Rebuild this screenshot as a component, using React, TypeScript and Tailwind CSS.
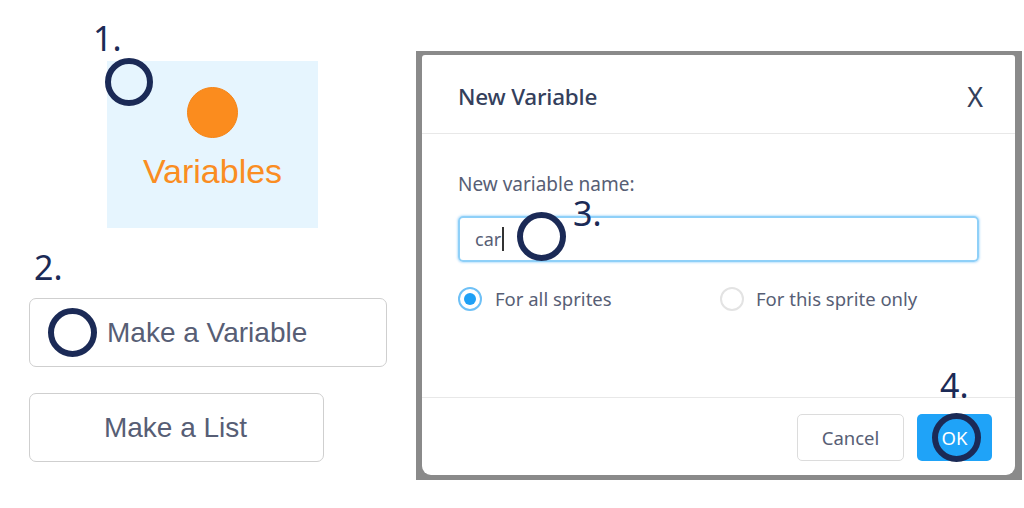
import React from "react";

function Ring({ className }: { className: string }) {
  return (
    <div
      className={`absolute rounded-full border-[6px] border-[#1b2a56] pointer-events-none ${className}`}
    />
  );
}

function Num({ children, className }: { children: React.ReactNode; className: string }) {
  return (
    <div
      className={`absolute text-[34px] leading-[28px] text-[#1b2a56] ${className}`}
      style={{ fontFamily: '"Noto Sans", "Liberation Sans", sans-serif' }}
    >
      {children}
    </div>
  );
}

export default function App() {
  const sans = { fontFamily: '"Liberation Sans", Arial, sans-serif' };
  const ui = { fontFamily: '"Noto Sans", "Open Sans", sans-serif' };
  return (
    <div className="relative w-[1024px] h-[508px] bg-white flex overflow-hidden">
      {/* Left column */}
      <div className="w-[416px] flex flex-col" style={sans}>
        <div className="ml-[107px] mt-[61px] w-[211px] h-[167px] bg-[#e6f5fe] flex flex-col items-center">
          <div className="mt-[26px] w-[51px] h-[51px] rounded-full bg-[#fb8c1e] border border-[#f58416]" />
          <div className="mt-[16px] text-[34px] leading-none text-[#fa8d22]">Variables</div>
        </div>
        <div className="ml-[29px] mt-[70px] w-[358px] h-[69px] rounded-[7px] border-[1.5px] border-[#cfcfcf] flex items-center pl-[77px]">
          <span className="text-[28px] leading-none text-[#575e75]">Make a Variable</span>
        </div>
        <div className="ml-[29px] mt-[26px] w-[295px] h-[69px] rounded-[7px] border-[1.5px] border-[#cfcfcf] flex items-center justify-center">
          <span className="text-[28px] leading-none text-[#575e75] mr-[2px]">Make a List</span>
        </div>
      </div>

      {/* Dialog */}
      <div className="mt-[51px] w-[606px] h-[429px] bg-[#8a8a8a] pt-[4px] pl-[6px] pr-[7px] pb-[5px]" style={ui}>
        <div className="w-full h-full bg-white rounded-t-[3px] rounded-b-[9px] flex flex-col">
          <div className="h-[79px] border-b border-[#e8e8e8] flex items-center justify-between pl-[36px] pr-[32px]">
            <span className="mt-[5px] text-[22.5px] font-medium text-[#34405c] tracking-[-0.2px]">New Variable</span>
            <span className="mt-[5px] text-[27px] font-normal text-[#34405c] leading-none">X</span>
          </div>
          <div className="flex-1 flex flex-col px-[36px]">
            <div className="mt-[41px] text-[19px] leading-none text-[#575e75]">New variable name:</div>
            <div className="mt-[22px] h-[46px] rounded-[5px] border-2 border-[#8fd0f8] shadow-[0_0_2px_1px_rgba(76,176,245,0.35)] flex items-center pl-[15px]">
              <span className="text-[18px] text-[#575e75] leading-none">car</span>
              <span className="ml-[1px] w-[1.5px] h-[24px] bg-[#333]" />
            </div>
            <div className="mt-[25px] flex items-center">
              <div className="flex items-center w-[262px]">
                <div className="w-[24px] h-[24px] rounded-full border-2 border-[#6ec0f6] flex items-center justify-center">
                  <div className="w-[12px] h-[12px] rounded-full bg-[#1ea0f6]" />
                </div>
                <span className="ml-[13px] text-[18.5px] leading-none text-[#575e75]">For all sprites</span>
              </div>
              <div className="flex items-center">
                <div className="w-[24px] h-[24px] rounded-full border-2 border-[#e3e3e3]" />
                <span className="ml-[12px] text-[18.5px] leading-none text-[#575e75]">For this sprite only</span>
              </div>
            </div>
          </div>
          <div className="h-[78px] border-t border-[#e8e8e8] flex items-start justify-end gap-[13px] pt-[16px] pr-[23px]">
            <div className="w-[107px] h-[47px] rounded-[5px] border-[1.5px] border-[#dcdcdc] flex items-center justify-center text-[18.5px] text-[#575e75]">
              Cancel
            </div>
            <div className="w-[75px] h-[47px] rounded-[5px] bg-[#1fa3f8] flex items-center justify-center text-[18.5px] text-white">
              OK
            </div>
          </div>
        </div>
      </div>

      {/* Annotations */}
      <Num className="left-[93px] top-[24px]">1.</Num>
      <Ring className="left-[105px] top-[58px] w-[48px] h-[48px]" />
      <Num className="left-[34px] top-[253px]">2.</Num>
      <Ring className="left-[48px] top-[308px] w-[49px] h-[49px]" />
      <Num className="left-[573px] top-[199px]">3.</Num>
      <Ring className="left-[517px] top-[212px] w-[49px] h-[49px]" />
      <Num className="left-[940px] top-[371px]">4.</Num>
      <Ring className="left-[932px] top-[413px] w-[49px] h-[49px]" />
    </div>
  );
}
